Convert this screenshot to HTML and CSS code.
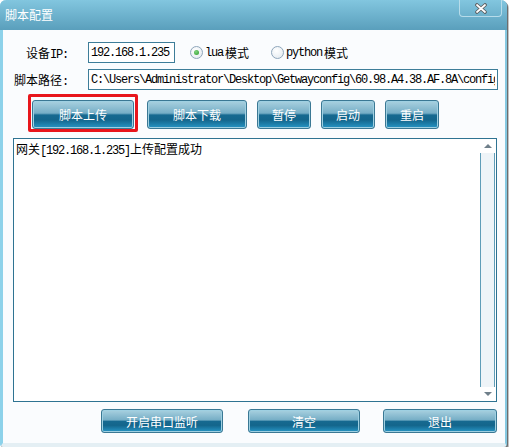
FILE: index.html
```html
<!DOCTYPE html>
<html lang="zh-CN">
<head>
    <meta charset="utf-8">
    <title>脚本配置</title>
    <link rel="stylesheet" href="styles.css">
</head>
<body>
<div class="win">
    <div class="title">
        <span class="title-text">脚本配置</span>
        <div class="close">
            <svg width="14" height="11" viewBox="0 0 14 11">
                <path d="M3 2 L11 9 M11 2 L3 9" stroke="#5a5a5a" stroke-width="3.6" stroke-linecap="round"/>
                <path d="M3 2 L11 9 M11 2 L3 9" stroke="#fff" stroke-width="1.8" stroke-linecap="round"/>
            </svg>
        </div>
    </div>
    <div class="body">
        <!-- device ip + mode -->
        <div class="row">
            <label class="lbl">设备<span class="asc">IP:</span></label>
            <input class="field field-ip" value="192.168.1.235">
            <label class="radio radio-lua"><span class="dot on"></span><span class="asc">lua</span>模式</label>
            <label class="radio radio-py"><span class="dot"></span><span class="asc">python</span>模式</label>
        </div>
        <!-- script path -->
        <div class="row row-path">
            <label class="lbl">脚本路径<span class="asc">:</span></label>
            <input class="field field-path" value="C:\Users\Administrator\Desktop\Getwayconfig\60.98.A4.38.AF.8A\config.lua">
        </div>
        <div class="actions">
            <button class="btn btn-upload">脚本上传</button>
            <button class="btn btn-down">脚本下载</button>
            <button class="btn btn-small">暂停</button>
            <button class="btn btn-small">启动</button>
            <button class="btn btn-small">重启</button>
        </div>
        <div class="log">
            <div class="log-text">网关<span class="asc">[192.168.1.235]</span>上传配置成功</div>
            <div class="scroll">
                <div class="arrow"><span class="tri up"></span></div>
                <div class="thumb"></div>
                <div class="arrow"><span class="tri down"></span></div>
            </div>
        </div>
        <div class="footer">
            <button class="btn btn-serial">开启串口监听</button>
            <button class="btn btn-clear">清空</button>
            <button class="btn btn-exit">退出</button>
        </div>
    </div>
</div>
</body>
</html>
```

FILE: styles.css
```css
body {
    margin: 0;
    background: #ffffff;
    font-family: "Noto Sans CJK SC", sans-serif;
    font-size: 12px;
}

.win {
    width: 507px;
    height: 447px;
    box-sizing: border-box;
    background: #fafcfe;
    border-left: 3px solid #8dd2ea;
    border-right: 2px solid #86c9e2;
    border-bottom: 4px solid #e4eff4;
    border-radius: 6px 6px 3px 3px;
    box-shadow: 1px 1px 0 #6e6e6e, 2px 2px 0 #c4c4c4;
    display: flex;
    flex-direction: column;
}

.title {
    height: 30px;
    margin-left: -3px;
    margin-right: -2px;
    background: linear-gradient(#82c6df, #5a9fbc);
    border-radius: 6px 6px 0 0;
    display: flex;
    align-items: flex-start;
}
.title-text {
    color: #fff;
    line-height: 30px;
    padding-left: 5px;
}
.close {
    margin-left: auto;
    margin-right: 5px;
    width: 41px;
    height: 16px;
    border: 1px solid #b7dcea;
    border-top: none;
    border-radius: 0 0 4px 4px;
    display: flex;
    align-items: center;
    justify-content: center;
}

.body {
    padding-top: 12px;
    display: flex;
    flex-direction: column;
}

.asc {
    font-family: "Liberation Mono", monospace;
    font-size: 12px;
    letter-spacing: -1.2px;
}

.row {
    display: flex;
    align-items: center;
    height: 21px;
}
.row-path { margin-top: 6px; }

.lbl {
    width: 65px;
    margin-right: 20px;
    text-align: right;
    color: #000;
    white-space: nowrap;
}
.field {
    box-sizing: border-box;
    height: 21px;
    margin: 0;
    padding: 0 2px;
    border: 1px solid #3d7d99;
    background: #fff;
    font-family: "Liberation Mono", monospace;
    font-size: 12px;
    letter-spacing: -1.2px;
    color: #000;
    outline: none;
}
.field-ip { width: 87px; }
.field-path { width: 410px; }

.radio {
    display: flex;
    align-items: center;
    gap: 2px;
    color: #000;
}
.radio-lua { margin-left: 15px; }
.radio-py { margin-left: 22px; }
.dot {
    width: 11px;
    height: 11px;
    border: 1px solid #8ea6bb;
    border-radius: 50%;
    background: radial-gradient(circle at 40% 35%, #ffffff, #dfe7ee);
    display: flex;
    align-items: center;
    justify-content: center;
}
.dot.on::before {
    content: "";
    width: 5px;
    height: 5px;
    border-radius: 50%;
    background: radial-gradient(circle at 40% 35%, #7ed47e, #2b9a2b);
}

.btn {
    box-sizing: border-box;
    margin: 0;
    padding: 0;
    border: 1px solid #3a7894;
    border-radius: 3px;
    box-shadow: inset 0 0 0 1px #9fd0e2;
    background: linear-gradient(#a9d1e0 0%, #76aec6 45%, #166990 52%, #14668c 70%, #2796c6 100%);
    color: #fff;
    font-family: "Noto Sans CJK SC", sans-serif;
    font-size: 12px;
    cursor: pointer;
}

.actions {
    margin-top: 10px;
    padding-left: 29px;
    display: flex;
    gap: 10px;
}
.actions .btn { height: 29px; }
.btn-upload {
    width: 102px;
    margin-right: 3px;
    position: relative;
}
/* red highlight frame round the upload button */
.btn-upload::after {
    content: "";
    position: absolute;
    top: -7px;
    left: -5px;
    right: -5px;
    bottom: -4px;
    border: 3px solid #e8161c;
    border-radius: 2px;
}
.btn-down { width: 100px; }
.btn-small { width: 54px; }

.log {
    margin-top: 9px;
    margin-left: 10px;
    width: 484px;
    height: 264px;
    box-sizing: border-box;
    border: 1px solid #2e7392;
    background: #fff;
    display: flex;
}
.log-text {
    flex: 1;
    padding: 2px 0 0 2px;
    color: #000;
    line-height: 16px;
}
.scroll {
    width: 16px;
    display: flex;
    flex-direction: column;
}
.arrow {
    height: 14px;
    display: flex;
    align-items: center;
    justify-content: center;
}
.thumb {
    flex: 1;
    margin: 0 1px 0 0;
    border-left: 1px solid #5f9db8;
    border-right: 1px solid #5f9db8;
    background: #eef4f8;
}
.tri {
    width: 0;
    height: 0;
    border-left: 4px solid transparent;
    border-right: 4px solid transparent;
}
.tri.up { border-bottom: 4px solid #6f7f8a; }
.tri.down { border-top: 4px solid #6f7f8a; }

.footer {
    margin-top: 7px;
    padding-left: 98px;
    display: flex;
}
.footer .btn { height: 24px; }
.btn-serial { width: 122px; }
.btn-clear { width: 112px; margin-left: 25px; }
.btn-exit { width: 114px; margin-left: 23px; }
```
